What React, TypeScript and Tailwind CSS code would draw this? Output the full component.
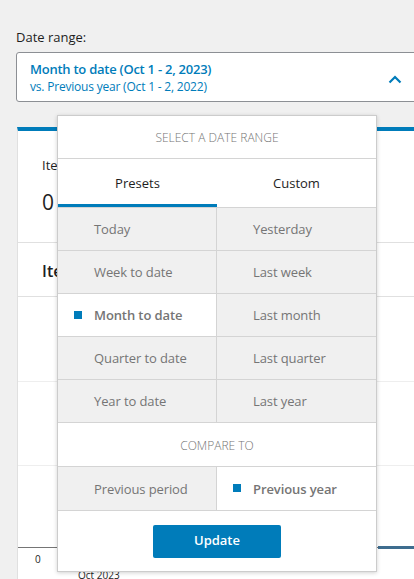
import React from "react";

const font = { fontFamily: '"Open Sans", "Noto Sans", sans-serif' };

const presets: [string, string][] = [
  ["Today", "Yesterday"],
  ["Week to date", "Last week"],
  ["Month to date", "Last month"],
  ["Quarter to date", "Last quarter"],
  ["Year to date", "Last year"],
];

const selected = "Month to date";

const Cell = ({ label, active, left }: { label: string; active: boolean; left: boolean }) => (
  <div
    className={`relative flex items-center h-full pt-[2px] pl-[36px] text-[13px] tracking-[-0.1px] text-[#757575] ${
      left ? "border-r border-[#d4d4d4]" : ""
    } ${active ? "bg-white font-semibold" : "bg-[#f0f0f0]"}`}
  >
    {active && <span className="absolute left-[16px] top-[17px] w-2 h-2 bg-[#007cba]" />}
    {label}
  </div>
);

const DatePopover = () => (
  <div className="absolute left-[41px] top-[63px] w-[320px] bg-white border border-[#cccccc] shadow-[0_1px_4px_rgba(0,0,0,0.18)] z-10">
    <div className="h-[43px] flex items-center justify-center pt-[2px] border-b border-[#d4d4d4] text-[12px] font-light uppercase text-[#757575]">
      Select a date range
    </div>
    <div className="h-[49px] grid grid-cols-2 border-b border-[#d4d4d4] text-[13px] text-[#1e1e1e]">
      <div className="flex items-center justify-center border-b-[3px] border-[#007cba] pt-[4px]">Presets</div>
      <div className="flex items-center justify-center pt-[2px]">Custom</div>
    </div>
    {presets.map(([a, b]) => (
      <div key={a} className="h-[43px] grid grid-cols-2 border-b border-[#d4d4d4]">
        <Cell label={a} active={a === selected} left />
        <Cell label={b} active={b === selected} left={false} />
      </div>
    ))}
    <div className="h-[44px] flex items-center justify-center pt-[2px] border-b border-[#d4d4d4] text-[12px] font-light uppercase text-[#757575]">
      Compare to
    </div>
    <div className="h-[44px] grid grid-cols-2 border-b border-[#d4d4d4]">
      <Cell label="Previous period" active={false} left />
      <Cell label="Previous year" active left={false} />
    </div>
    <div className="h-[60px] flex items-center justify-center">
      <button className="w-[128px] h-[33px] rounded-[2px] bg-[#007cba] text-white text-[13px] font-semibold">
        Update
      </button>
    </div>
  </div>
);

export default function App() {
  return (
    <div className="w-[414px] h-[579px] overflow-hidden bg-[#f0f0f0] text-[#1e1e1e]" style={font}>
      <div className="w-[460px] pl-4 pt-[28px]">
        <div className="text-[13px] leading-[18px] text-[#1e1e1e]">Date range:</div>
        <div className="relative mt-[6px]">
          <div className="h-[50px] bg-white border border-[#8c8f94] rounded-[3px] flex items-center pl-[13px] pt-[2px]">
            <div className="flex flex-col">
              <span className="text-[13px] font-semibold leading-[17px] tracking-[-0.25px] text-[#007cba]">
                Month to date (Oct 1 - 2, 2023)
              </span>
              <span className="text-[12px] leading-[17px] tracking-[-0.2px] text-[#007cba]">
                vs. Previous year (Oct 1 - 2, 2022)
              </span>
            </div>
            <svg className="absolute left-[372px] top-[23px]" width="14" height="9" viewBox="0 0 14 9">
              <path d="M1.5 7.5 L7 2 L12.5 7.5" fill="none" stroke="#007cba" strokeWidth="2.2" />
            </svg>
          </div>
          <DatePopover />
          <div className="mt-[25px] ml-px bg-white border-l border-[#e0e0e0] border-t-[4px] border-t-[#007cba]">
            <div className="h-[112px] border-b border-[#e0e0e0] pl-[24px] pt-[25px]">
              <div className="text-[13px] leading-[18px]">Items sold</div>
              <div className="text-[21px] leading-[28px] mt-[14px]">0</div>
            </div>
            <div className="h-[54px] border-b border-[#e0e0e0] pl-[24px] pt-[2px] flex items-center">
              <span className="text-[16px] font-semibold">Items sold</span>
            </div>
            <div className="h-[85px] border-b border-[#eeeeee]" />
            <div className="h-[84px] border-b border-[#eeeeee]" />
            <div className="h-[82px] border-b border-[#757575] relative">
              <div className="absolute left-[360px] right-0 -bottom-[2px] h-[3px] bg-[#3e6d8f]" />
            </div>
            <div className="relative h-[40px] text-[10px] text-[#1e1e1e]">
              <span className="absolute left-[17px] top-[4px]">0</span>
              <span className="absolute left-[60px] top-[20px]">Oct 2023</span>
            </div>
          </div>
        </div>
      </div>
    </div>
  );
}
